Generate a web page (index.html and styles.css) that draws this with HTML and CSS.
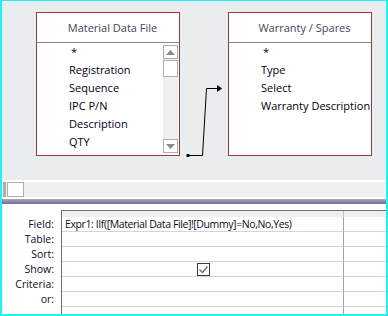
FILE: index.html
```html
<!DOCTYPE html>
<html>
<head>
<meta charset="utf-8">
<link rel="stylesheet" href="styles.css">
</head>
<body>
<div class="frame">
  <div class="canvas">
    <div class="fieldlist">
      <div class="fl-head">Material Data File</div>
      <div class="fl-body">
        <div class="fl-items">
          <div class="fl-item star">*</div>
          <div class="fl-item">Registration</div>
          <div class="fl-item">Sequence</div>
          <div class="fl-item">IPC P/N</div>
          <div class="fl-item">Description</div>
          <div class="fl-item">QTY</div>
        </div>
        <div class="vscroll">
          <div class="vs-btn"><svg width="9" height="5" viewBox="0 0 9 5"><path d="M0 5 L4.5 0 L9 5 Z" fill="#8a8a8a"/></svg></div>
          <div class="vs-thumb"></div>
          <div class="vs-track"></div>
          <div class="vs-btn"><svg width="9" height="5" viewBox="0 0 9 5"><path d="M0 0 L4.5 5 L9 0 Z" fill="#8a8a8a"/></svg></div>
        </div>
      </div>
    </div>
    <div class="fieldlist">
      <div class="fl-head">Warranty / Spares</div>
      <div class="fl-body">
        <div class="fl-items">
          <div class="fl-item star">*</div>
          <div class="fl-item">Type</div>
          <div class="fl-item">Select</div>
          <div class="fl-item">Warranty Description</div>
        </div>
      </div>
    </div>
    <svg class="join" width="240" height="170" viewBox="0 0 240 170">
      <rect x="184.5" y="153" width="3" height="3" fill="#000"/>
      <path d="M185 154.5 H200.5 L204.5 87.5 H216" fill="none" stroke="#000" stroke-width="1"/>
      <path d="M215 84 L220 87.5 L215 91 Z" fill="#000"/>
    </svg>
  </div>
  <div class="gap-line"></div>
  <div class="hscroll">
    <div class="hs-left"></div>
    <div class="hs-thumb"></div>
  </div>
  <div class="gap-line"></div>
  <div class="splitter"></div>
  <div class="qbe">
    <div class="labels">
      <div class="lbl">Field:</div>
      <div class="lbl">Table:</div>
      <div class="lbl">Sort:</div>
      <div class="lbl">Show:</div>
      <div class="lbl">Criteria:</div>
      <div class="lbl">or:</div>
    </div>
    <div class="grid">
      <div class="hdr c1"></div>
      <div class="hdr"></div>
      <div class="cell c1 text">Expr1: IIf([Material Data File]![Dummy]=No,No,Yes)</div>
      <div class="cell"></div>
      <div class="cell c1"></div>
      <div class="cell"></div>
      <div class="cell c1"></div>
      <div class="cell"></div>
      <div class="cell c1 center"><span class="check"><svg width="11" height="11" viewBox="0 0 11 11"><path d="M1.5 5.5 L4.5 8.5 L9.5 2.5" fill="none" stroke="#6a6a6a" stroke-width="1.3"/></svg></span></div>
      <div class="cell"></div>
      <div class="cell c1"></div>
      <div class="cell"></div>
      <div class="cell c1"></div>
      <div class="cell"></div>
      <div class="cell c1"></div>
      <div class="cell"></div>
    </div>
  </div>
</div>
</body>
</html>
```

FILE: styles.css
```css
html, body {
  margin: 0;
  padding: 0;
  background: #ffffff;
}
.frame {
  width: 388px;
  height: 316px;
  box-sizing: border-box;
  border-style: solid;
  border-color: #1ff0f7;
  border-width: 1px 2px 2px 2px;
  overflow: hidden;
  font-family: "Open Sans", "Noto Sans", sans-serif;
  font-size: 11px;
  color: #0c0c1e;
  background: #ffffff;
}
.canvas {
  position: relative;
  height: 179px;
  box-sizing: border-box;
  background: #e9edf0;
  padding: 11px 0 0 34px;
  display: flex;
  align-items: flex-start;
  gap: 48px;
}
.fieldlist {
  width: 144px;
  height: 144px;
  box-sizing: border-box;
  border: 1px solid #a6353a;
  background: #ffffff;
  display: flex;
  flex-direction: column;
}
.fl-head {
  height: 29px;
  line-height: 30px;
  border-bottom: 1px solid #8c8c8c;
  text-align: center;
  padding-left: 9px;
  color: #45455c;
  font-size: 11px;
  white-space: nowrap;
}
.fl-body {
  flex: 1;
  display: flex;
  min-height: 0;
  overflow: hidden;
}
.fl-items {
  flex: 1;
  min-width: 0;
  padding-left: 32px;
}
.fl-item {
  height: 18px;
  line-height: 18px;
  white-space: nowrap;
  font-size: 11px;
  color: #000010;
}
.fl-item.star {
  padding-left: 2px;
}
.vscroll {
  width: 15px;
  margin: 2px 1px 2px 0;
  background: #f0f0f0;
  display: flex;
  flex-direction: column;
}
.vs-btn {
  height: 14px;
  box-sizing: border-box;
  border: 1px solid #adadad;
  background: #ffffff;
  display: flex;
  align-items: center;
  justify-content: center;
}
.vs-thumb {
  height: 17px;
  margin-top: 1px;
  box-sizing: border-box;
  border: 1px solid #adadad;
  background: #ffffff;
}
.vs-track {
  flex: 1;
}
.join {
  position: absolute;
  left: 0;
  top: 0;
}
.gap-line {
  height: 2px;
  background: #ffffff;
}
.hscroll {
  height: 15px;
  background: #f0f0f0;
  display: flex;
}
.hs-left {
  width: 3px;
  margin-left: 1px;
  background: #adadad;
}
.hs-thumb {
  width: 17px;
  margin-left: 1px;
  box-sizing: border-box;
  border: 1px solid #adadad;
  background: #ffffff;
}
.splitter {
  height: 5px;
  background: linear-gradient(#a9a9c0, #8a8aa6 50%, #727290);
}
.qbe {
  display: flex;
  padding-top: 6px;
  background: #ffffff;
  font-size: 10.5px;
}
.labels {
  width: 59px;
  box-sizing: border-box;
  padding: 7px 7px 0 0;
  text-align: right;
}
.lbl {
  height: 15px;
  line-height: 15px;
  color: #0c0c24;
}
.grid {
  flex: 1;
  border-left: 1px solid #6e6e6e;
  border-top: 1px solid #6e6e6e;
  display: grid;
  grid-template-columns: 282px 1fr;
}
.hdr {
  height: 6px;
  background: #efefef;
}
.hdr.c1 {
  box-sizing: border-box;
  border-right: 1px solid #c4c4c4;
}
.cell {
  height: 15px;
  box-sizing: border-box;
  border-bottom: 1px solid #cfd6e0;
  line-height: 15px;
  white-space: nowrap;
}
.cell.c1 {
  border-right: 1px solid #a3a3a3;
}
.cell.text {
  padding-left: 3px;
  color: #0c0c24;
  letter-spacing: -0.4px;
}
.cell.center {
  display: flex;
  justify-content: center;
  align-items: flex-start;
  padding-left: 2px;
}
.check {
  width: 13px;
  height: 13px;
  margin-top: 1px;
  box-sizing: border-box;
  border: 1px solid #3a3a3a;
  display: flex;
  align-items: center;
  justify-content: center;
  background: #ffffff;
}
```
